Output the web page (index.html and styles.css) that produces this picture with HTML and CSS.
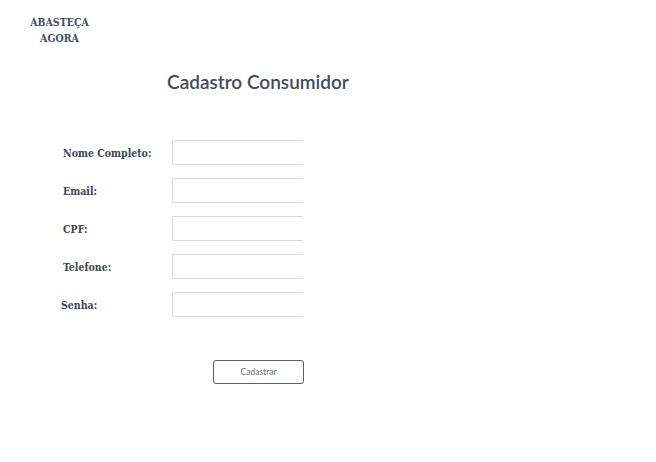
FILE: index.html
```html
<!DOCTYPE html>
<html lang="pt-BR">
<head>
<meta charset="utf-8">
<title>Cadastro Consumidor</title>
<link rel="stylesheet" href="styles.css">
</head>
<body>
<header class="brand">
  <div class="brand-name">ABASTEÇA<br>AGORA</div>
</header>
<main class="page">
  <h1 class="title">Cadastro Consumidor</h1>
  <form class="form">
    <div class="row">
      <label class="label" for="nome">Nome Completo:</label>
      <input class="field" id="nome" type="text">
    </div>
    <div class="row">
      <label class="label" for="email">Email:</label>
      <input class="field" id="email" type="text">
    </div>
    <div class="row">
      <label class="label" for="cpf">CPF:</label>
      <input class="field" id="cpf" type="text">
    </div>
    <div class="row">
      <label class="label" for="tel">Telefone:</label>
      <input class="field" id="tel" type="text">
    </div>
    <div class="row row-senha">
      <label class="label" for="senha">Senha:</label>
      <input class="field" id="senha" type="password">
    </div>
    <div class="actions">
      <button class="btn" type="button">Cadastrar</button>
    </div>
  </form>
</main>
</body>
</html>
```
FILE: styles.css
```css
* { box-sizing: border-box; }
html, body { margin: 0; padding: 0; background: #fff; }
body { width: 656px; height: 462px; overflow: hidden; font-family: "DejaVu Serif", serif; }

.brand { padding: 14px 0 0 30px; }
.brand-name {
  width: 59px;
  text-align: center;
  font-family: "DejaVu Serif Condensed", "DejaVu Serif", serif;
  font-weight: bold;
  font-size: 10.5px;
  line-height: 16px;
  color: #4a4f5b;
}

.page { padding-left: 63px; }
.title {
  margin: 24px 0 0 104px;
  font-family: Lato, sans-serif;
  font-weight: 600;
  font-size: 19px;
  line-height: 23px;
  color: #454b57;
}

.form { margin-top: 47px; display: flex; flex-direction: column; gap: 13px; }
.row { display: flex; align-items: center; height: 25px; }
.row-senha { margin-left: -2px; }
.row-senha .label { width: 111px; }
.label {
  width: 109px;
  font-family: "DejaVu Serif Condensed", "DejaVu Serif", serif;
  font-size: 10.5px;
  font-weight: 600;
  color: #3f4553;
}
.field {
  width: 131px;
  height: 25px;
  margin: 0;
  padding: 0 4px;
  border: 1px solid #dcdcdc;
  border-right: none;
  border-radius: 2px 0 0 2px;
  background: #fff;
  outline: none;
}

.actions { display: flex; padding-left: 150px; margin-top: 30px; }
.btn {
  width: 91px;
  height: 24px;
  margin: 0;
  padding: 0;
  border: 1px solid #5a5f66;
  border-radius: 3px;
  background: #fff;
  font-family: Lato, sans-serif;
  font-size: 8.5px;
  color: #6b6f75;
}
```
